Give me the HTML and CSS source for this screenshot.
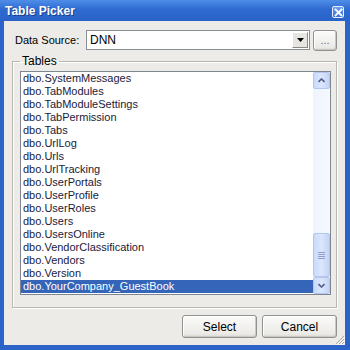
FILE: index.html
```html
<!DOCTYPE html>
<html lang="en">
<head>
  <meta charset="UTF-8" />
  <title>Table Picker</title>
  <link rel="stylesheet" href="styles.css">
</head>
<body>
  <div class="window">
    <div class="titlebar">
      <span class="title">Table Picker</span>
      <span class="close">
        <svg width="9" height="9" viewBox="0 0 9 9"><path d="M1.5 1.5 L7.5 7.5 M7.5 1.5 L1.5 7.5" stroke="#fff" stroke-width="1.8" stroke-linecap="square"/></svg>
      </span>
    </div>

    <div class="content">
      <div class="source-row">
        <label class="source-label">Data Source:</label>
        <div class="combo">
          <span class="combo-text">DNN</span>
          <span class="combo-btn">
            <svg width="7" height="4" viewBox="0 0 7 4"><path d="M0 0 H7 L3.5 4 Z" fill="#000"/></svg>
          </span>
        </div>
        <button class="btn browse">...</button>
      </div>

      <fieldset class="tables">
        <legend>Tables</legend>
        <div class="listbox">
          <ul class="items">
            <li>dbo.SystemMessages</li>
            <li>dbo.TabModules</li>
            <li>dbo.TabModuleSettings</li>
            <li>dbo.TabPermission</li>
            <li>dbo.Tabs</li>
            <li>dbo.UrlLog</li>
            <li>dbo.Urls</li>
            <li>dbo.UrlTracking</li>
            <li>dbo.UserPortals</li>
            <li>dbo.UserProfile</li>
            <li>dbo.UserRoles</li>
            <li>dbo.Users</li>
            <li>dbo.UsersOnline</li>
            <li>dbo.VendorClassification</li>
            <li>dbo.Vendors</li>
            <li>dbo.Version</li>
            <li class="selected">dbo.YourCompany_GuestBook</li>
          </ul>
          <div class="scrollbar">
            <span class="sb-btn">
              <svg width="7" height="5" viewBox="0 0 7 5"><path d="M0.5 4 L3.5 1 L6.5 4" fill="none" stroke="#4d6185" stroke-width="1.6"/></svg>
            </span>
            <div class="sb-track">
              <span class="sb-thumb">
                <svg width="7" height="7" viewBox="0 0 7 7"><path d="M0 0.5 H7 M0 2.5 H7 M0 4.5 H7 M0 6.5 H7" stroke="#8ca0c8" stroke-width="1"/></svg>
              </span>
            </div>
            <span class="sb-btn">
              <svg width="7" height="5" viewBox="0 0 7 5"><path d="M0.5 1 L3.5 4 L6.5 1" fill="none" stroke="#4d6185" stroke-width="1.6"/></svg>
            </span>
          </div>
        </div>
      </fieldset>

      <div class="actions">
        <button class="btn">Select</button>
        <button class="btn">Cancel</button>
      </div>
    </div>

    <span class="grip">
      <svg width="11" height="11" viewBox="0 0 11 11"><path d="M10 2 L2 10 M10 5 L5 10 M10 8 L8 10" stroke="#a8a89c" stroke-width="1"/><path d="M11 3 L3 11 M11 6 L6 11 M11 9 L9 11" stroke="#fff" stroke-width="1"/></svg>
    </span>
  </div>
</body>
</html>
```

FILE: styles.css
```css
body {
  margin: 0;
  font-family: "Liberation Sans", Arial, sans-serif;
  font-size: 11px;
  color: #000;
}
.window {
  position: relative;
  width: 350px;
  height: 350px;
  box-sizing: border-box;
  display: flex;
  flex-direction: column;
  background: #ecebe7;
  border-left: 4px solid #2c63c9;
  border-right: 5px solid #2c63c9;
  border-bottom: 5px solid #2c63c9;
}
.titlebar {
  height: 21px;
  margin: 0 -5px 0 -4px;
  padding: 0 6px 0 5px;
  display: flex;
  align-items: center;
  justify-content: space-between;
  background: linear-gradient(#4f8ee8, #2f6ad1 45%, #2a63c8);
}
.title {
  color: #fff;
  font-weight: bold;
  font-size: 12px;
  text-shadow: 1px 1px 0 #1a3f8a;
}
.close {
  width: 12px;
  height: 12px;
  display: flex;
  align-items: center;
  justify-content: center;
  box-sizing: border-box;
  border: 1px solid #e8eefc;
  border-radius: 2px;
  background: linear-gradient(#6a9df0, #3a72dc);
  margin-top: 3px;
}
.content {
  flex: 1;
  display: flex;
  flex-direction: column;
  padding: 9px 8px 0 9px;
}
.source-row {
  display: flex;
  align-items: center;
  height: 20px;
}
.source-label {
  width: 71px;
  padding-left: 2px;
}
.combo {
  flex: 1;
  height: 20px;
  box-sizing: border-box;
  display: flex;
  align-items: center;
  background: #fff;
  border: 1px solid #8a8f96;
  padding: 1px;
}
.combo-text {
  flex: 1;
  padding-left: 2px;
  font-size: 12px;
}
.combo-btn {
  width: 16px;
  height: 16px;
  box-sizing: border-box;
  display: flex;
  align-items: center;
  justify-content: center;
  background: #e6e5e0;
  border: 1px solid;
  border-color: #fff #8a8a86 #8a8a86 #fff;
}
.btn {
  font-family: "Liberation Sans", Arial, sans-serif;
  font-size: 12px;
  color: #000;
  box-sizing: border-box;
  border: 1px solid #8f9290;
  border-radius: 3px;
  background: linear-gradient(#fbfbfa, #ebeae6 85%, #d8d7d2);
  box-shadow: inset -1px -1px 0 #c9c8c2, inset 1px 1px 0 #fff;
  padding: 0;
}
.browse {
  width: 24px;
  height: 21px;
  margin-left: 3px;
  color: #6a6a8a;
  font-size: 11px;
}
.tables {
  margin: 5px 0 0 -1px;
  padding: 0 5px 12px 7px;
  border: 1px solid #b8b7b0;
  box-shadow: inset 1px 1px 0 #fff, 1px 1px 0 #fff;
}
.tables legend {
  padding: 0 2px;
  margin-left: 0;
  font-size: 12px;
  line-height: 13px;
}
.listbox {
  height: 224px;
  box-sizing: border-box;
  margin-top: 3px;
  display: flex;
  background: #fff;
  border: 1px solid #7f8690;
}
.items {
  flex: 1;
  list-style: none;
  margin: 0;
  padding: 0;
  overflow: hidden;
}
.items li {
  height: 13px;
  line-height: 13px;
  padding-left: 2px;
  white-space: nowrap;
  color: #1a1a3a;
}
.items li.selected {
  background: #3565b8;
  color: #fff;
}
.scrollbar {
  width: 17px;
  display: flex;
  flex-direction: column;
  background: linear-gradient(90deg, #eef3fd, #f6f9fe);
}
.sb-btn,
.sb-thumb {
  box-sizing: border-box;
  display: flex;
  align-items: center;
  justify-content: center;
  border: 1px solid #b3c6ee;
  border-radius: 2px;
  background: linear-gradient(90deg, #c9dafb, #dbe6fd 50%, #c4d4f6);
}
.sb-btn {
  height: 17px;
}
.sb-track {
  flex: 1;
  display: flex;
  flex-direction: column;
  justify-content: flex-end;
}
.sb-thumb {
  height: 44px;
}
.actions {
  display: flex;
  justify-content: flex-end;
  gap: 5px;
  margin-top: 7px;
}
.actions .btn {
  width: 75px;
  height: 23px;
}
.grip {
  position: absolute;
  right: 0;
  bottom: 0;
  width: 11px;
  height: 11px;
}
```
